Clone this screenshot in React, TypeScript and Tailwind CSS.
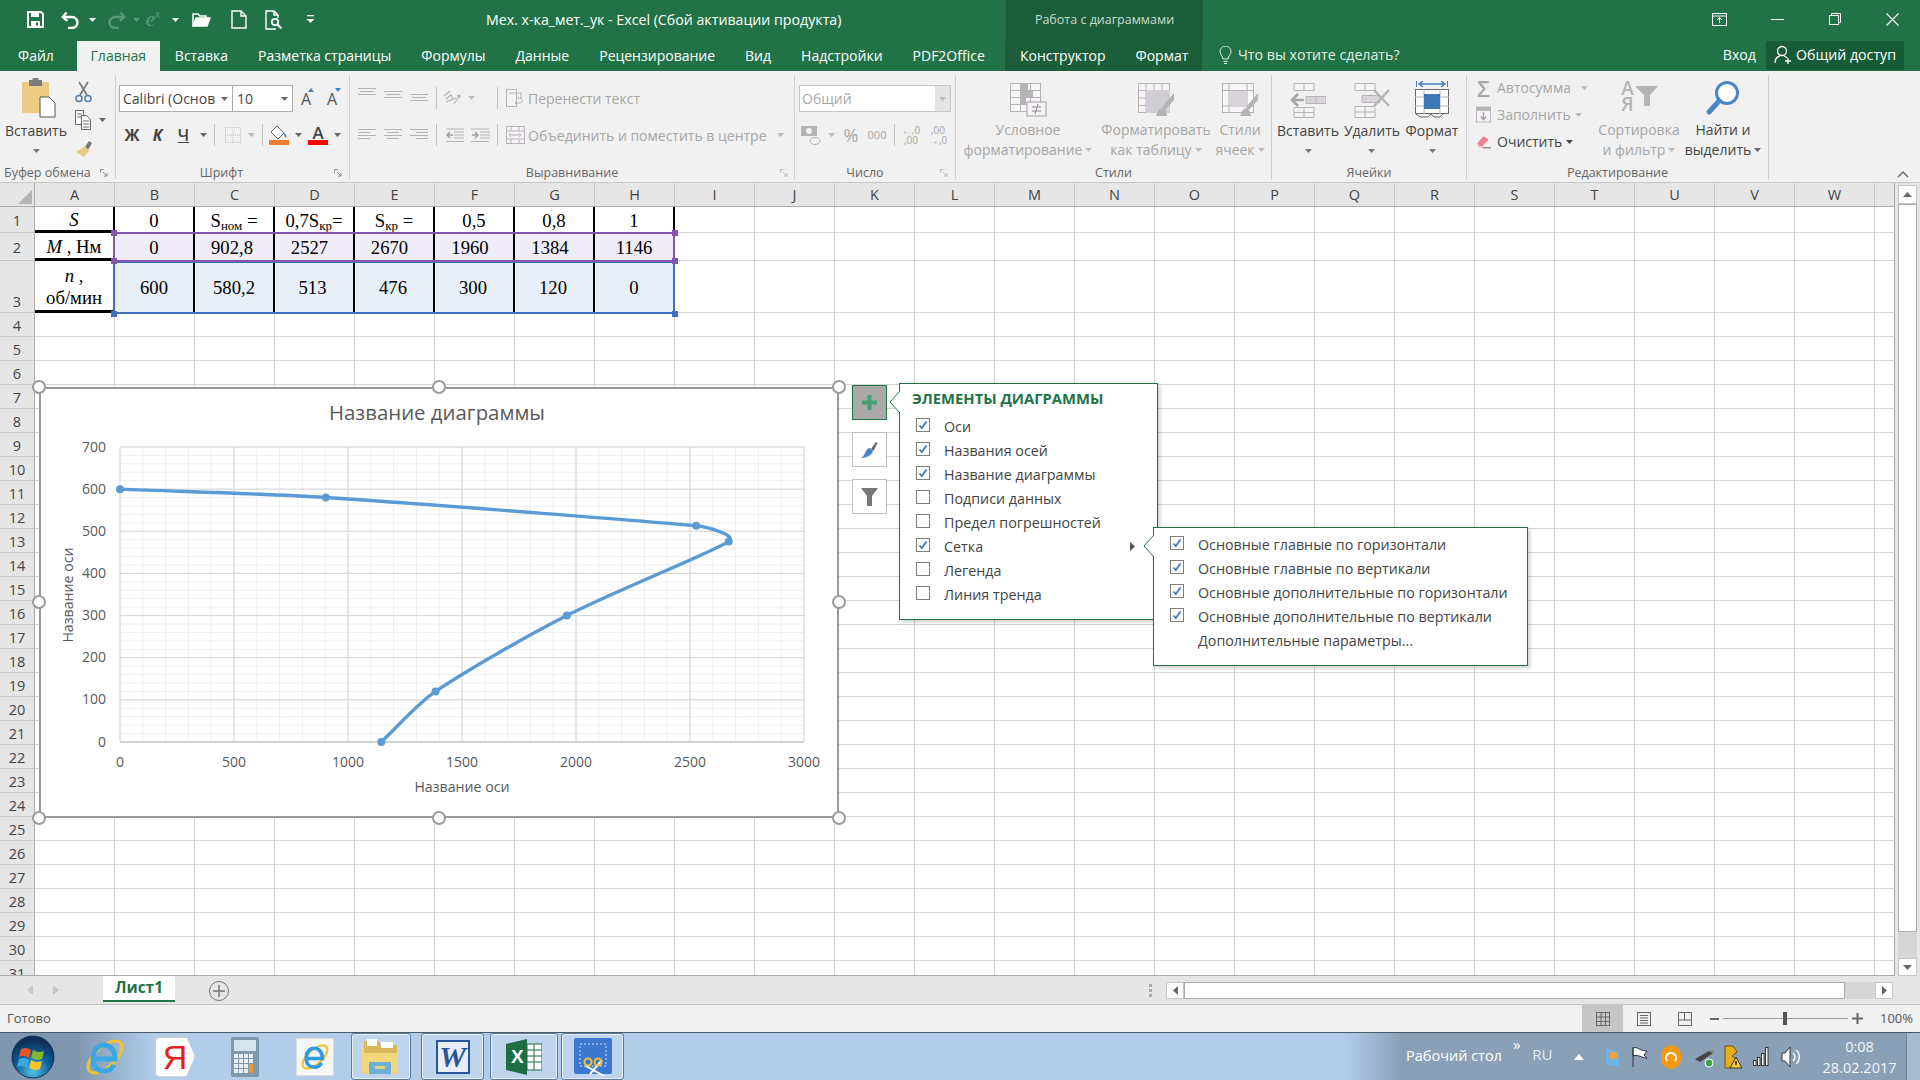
import React from "react";

const Caret = ({ c = "#666" }: { c?: string }) => (
  <svg width="7" height="4" viewBox="0 0 7 4"><path d="M0 0h7L3.5 4z" fill={c} /></svg>
);
const Launcher = ({ c = "#888" }: { c?: string }) => (
  <svg width="9" height="9" viewBox="0 0 9 9" fill="none" stroke={c}><path d="M.5 3.5V.5h3M3 3l4 4M7 4v3H4" /></svg>
);
const Sep = () => <div className="w-px h-[22px] bg-[#c6c6c6]" />;

const AlignLines = ({ rows }: { rows: [number, number][] }) => (
  <svg width="18" height="14" viewBox="0 0 18 14" stroke="#b4b4b4" strokeWidth="1">
    {rows.map(([a, b], i) => <path key={i} d={`M${a} ${i * 3 + 1.5}H${b}`} />)}
  </svg>
);

function smoothPath(p: [number, number][]) {
  const dist = (a: number[], b: number[]) => Math.hypot(a[0] - b[0], a[1] - b[1]);
  const dir = (i: number) => {
    const a = p[Math.max(i - 1, 0)], c = p[Math.min(i + 1, p.length - 1)];
    const l = dist(a, c) || 1;
    return [(c[0] - a[0]) / l, (c[1] - a[1]) / l];
  };
  const seg = (i: number) => (i < 0 || i >= p.length - 1 ? Infinity : dist(p[i], p[i + 1]));
  let d = `M${p[0][0]} ${p[0][1]}`;
  for (let i = 0; i < p.length - 1; i++) {
    const L = seg(i);
    const h1 = Math.min(L * 0.3, seg(i - 1) * 0.5);
    const h2 = Math.min(L * 0.3, seg(i + 1) * 0.5);
    const d1 = dir(i), d2 = dir(i + 1);
    d += ` C${p[i][0] + d1[0] * h1} ${p[i][1] + d1[1] * h1} ${p[i + 1][0] - d2[0] * h2} ${p[i + 1][1] - d2[1] * h2} ${p[i + 1][0]} ${p[i + 1][1]}`;
  }
  return d;
}

function Chart() {
  const X = (v: number) => 120 + (v * 684) / 3000;
  const Y = (v: number) => 742 - (v * 295) / 700;
  const data: [number, number][] = [[0, 600], [902.8, 580.2], [2527, 513], [2670, 476], [1960, 300], [1384, 120], [1146, 0]];
  const pts = data.map(([a, b]) => [X(a), Y(b)] as [number, number]);
  const xsMinor = Array.from({ length: 31 }, (_, i) => i * 100);
  const ysMinor = Array.from({ length: 36 }, (_, i) => i * 20);
  return (
    <svg width="800" height="431" viewBox="39 387 800 431" className="block">
      {xsMinor.map((v) => <path key={v} d={`M${X(v)} 447V742`} stroke="#efefef" strokeWidth="1" />)}
      {ysMinor.map((v) => <path key={v} d={`M120 ${Y(v)}H804`} stroke="#efefef" strokeWidth="1" />)}
      {[0, 500, 1000, 1500, 2000, 2500, 3000].map((v) => <path key={v} d={`M${X(v)} 447V742`} stroke="#d6d6d6" strokeWidth="1" />)}
      {[0, 100, 200, 300, 400, 500, 600, 700].map((v) => <path key={v} d={`M120 ${Y(v)}H804`} stroke="#d6d6d6" strokeWidth="1" />)}
      <path d="M120 742H804" stroke="#bfbfbf" strokeWidth="1" />
      <path d={smoothPath(pts)} fill="none" stroke="#5b9bd5" strokeWidth="3.4" strokeLinecap="round" />
      {pts.map(([a, b], i) => <circle key={i} cx={a} cy={b} r="4" fill="#5b9bd5" />)}
      <g fontFamily="'Open Sans', sans-serif" fill="#595959" fontSize="14">
        <text x="437" y="420" textAnchor="middle" fontSize="20.4">Название диаграммы</text>
        {[0, 100, 200, 300, 400, 500, 600, 700].map((v) => <text key={v} x="106" y={Y(v) + 4.5} textAnchor="end">{v}</text>)}
        {[0, 500, 1000, 1500, 2000, 2500, 3000].map((v) => <text key={v} x={X(v)} y="767" textAnchor="middle">{v}</text>)}
        <text x="462" y="792" textAnchor="middle" fontSize="14.2">Название оси</text>
        <text x="0" y="0" textAnchor="middle" fontSize="14.2" transform="translate(73 595) rotate(-90)">Название оси</text>
      </g>
    </svg>
  );
}

const Handle = ({ className }: { className: string }) => (
  <div className={`absolute w-[14px] h-[14px] rounded-full bg-white border-[2.5px] border-[#9a9a9a] ${className}`} />
);

const Check = ({ on }: { on: boolean }) => (
  <div className="w-[14px] h-[14px] bg-white border border-[#7f7f7f] flex items-center justify-center shrink-0">
    {on && (
      <svg width="10" height="10" viewBox="0 0 10 10" fill="none"><path d="M1.5 5.5l2.3 2.5L8.5 1.5" stroke="#3f78b8" strokeWidth="1.8" /></svg>
    )}
  </div>
);

const MenuRow = ({ on, label }: { on?: boolean; label: string }) => (
  <div className="h-[24px] flex items-center pl-[16px]">
    {on === undefined ? <div className="w-[14px]" /> : <div className="-mt-[5px]"><Check on={on} /></div>}
    <span className="ml-[14px] text-[14.3px] text-[#444] whitespace-nowrap">{label}</span>
  </div>
);

const COLS = "ABCDEFGHIJKLMNOPQRSTUVW".split("");

const TableText = ({ children }: { children: React.ReactNode }) => (
  <div className="font-['Liberation_Serif'] text-[18.67px] leading-[22px] text-black text-center mt-[3px]">{children}</div>
);

const row1 = [
  <i key="a">S</i>, "0",
  <span key="c">S<sub className="text-[13px] leading-[0]">ном</sub> =</span>,
  <span key="d">0,7S<sub className="text-[13px] leading-[0]">кр</sub>=</span>,
  <span key="e">S<sub className="text-[13px] leading-[0]">кр</sub> =</span>,
  "0,5", "0,8", "1",
];
const row2 = [
  <span key="a"><i>M</i> , Нм</span>, "0",
  <span key="c" className="pr-[4px]">902,8</span>,
  <span key="d" className="pr-[9px]">2527</span>,
  <span key="e" className="pr-[9px]">2670</span>,
  <span key="f" className="pr-[8px]">1960</span>,
  <span key="g" className="pr-[8px]">1384</span>, "1146",
];
const row3 = [
  <span key="a" className="block"><i>n</i> ,<br />об/мин</span>, "600", "580,2",
  <span key="d" className="pr-[3px]">513</span>,
  <span key="e" className="pr-[2px]">476</span>,
  <span key="f" className="pr-[2px]">300</span>,
  <span key="g" className="pr-[2px]">120</span>, "0",
];

function GridRow({ n }: { n: number }) {
  const h = n === 1 ? "h-[26px]" : n === 2 ? "h-[28px]" : n === 3 ? "h-[52px]" : "h-[24px]";
  const data = n === 1 ? row1 : n === 2 ? row2 : n === 3 ? row3 : null;
  const bg = n === 2 ? "bg-[#f1edf8]" : n === 3 ? "bg-[#e8eff9]" : "bg-white";
  return (
    <div className={`flex ${h} shrink-0`}>
      <div className={`w-[35px] shrink-0 bg-[#e6e6e6] border-r border-b border-r-[#ababab] border-b-[#c6c6c6] flex justify-center text-[14.5px] leading-[20px] text-[#444] ${n === 3 ? "items-end" : "items-center pt-[3px]"}`}>{n}</div>
      {COLS.map((c, i) => {
        const isData = data && i < 8;
        const border = isData
          ? `border-r-2 border-r-black ${i === 0 ? "border-b-[3px] border-b-black" : "border-b border-b-[#d4d4d4]"}`
          : "border-r border-b border-[#d4d4d4]";
        const cellBg = isData && i > 0 ? bg : "bg-white";
        return (
          <div key={c} className={`w-[80px] shrink-0 flex items-center justify-center ${border} ${cellBg}`}>
            {isData && <TableText>{data![i]}</TableText>}
          </div>
        );
      })}
      <div className="w-[20px] shrink-0 border-b border-[#d4d4d4] bg-white" />
    </div>
  );
}

const Tab = ({ children }: { children: React.ReactNode }) => (
  <div className="h-full flex items-center px-[15px] pb-[2px] whitespace-nowrap text-[14px] text-white">{children}</div>
);

const GroupLabel = ({ children }: { children: React.ReactNode }) => (
  <div className="relative h-[16px] -mb-[2px] mt-auto flex items-center justify-center text-[12.5px] text-[#666] whitespace-nowrap">
    <span>{children}</span>
  </div>
);

const BigLabel = ({ a, b, dim }: { a: string; b?: string; dim?: boolean }) => (
  <div className={`text-[14px] leading-[20px] mt-[3px] text-center whitespace-nowrap ${dim ? "text-[#a6a6a6]" : "text-[#444]"}`}>
    <div>{a}</div>
    {b !== undefined ? (
      <div className="flex items-center justify-center gap-[3px]">{b}<Caret c={dim ? "#bbb" : "#666"} /></div>
    ) : (
      <div className="flex justify-center h-[20px] items-center"><Caret c="#777" /></div>
    )}
  </div>
);

export default function App() {
  return (
    <div className="relative w-[1920px] h-[1080px] overflow-hidden bg-white font-['Open_Sans',sans-serif] flex flex-col">
      {/* Title bar */}
      <div className="flex h-[41px] bg-[#217346] text-white shrink-0">
        <div className="w-[1006px] flex items-center pb-[2px]">
          <div className="w-[24px] ml-[23px] flex justify-center">
            <svg width="17" height="17" viewBox="0 0 17 17"><path d="M1 1h13l2 2v13H1z" fill="none" stroke="#fff" strokeWidth="2" /><rect x="4" y="1" width="8" height="5" fill="#fff" /><rect x="4" y="10" width="9" height="6" fill="#fff" /><rect x="9" y="11.5" width="2" height="3" fill="#217346" /></svg>
          </div>
          <div className="w-[24px] ml-[12px] flex justify-center">
            <svg width="20" height="18" viewBox="0 0 20 18" fill="none" stroke="#fff" strokeWidth="2.4"><path d="M5.5 1.5L1.8 6l4.5 3.8" /><path d="M2 6h9a5.5 5.5 0 0 1 0 11H7" /></svg>
          </div>
          <div className="w-[12px] ml-[3px] flex justify-center"><Caret c="#fff" /></div>
          <div className="w-[24px] ml-[6px] flex justify-center">
            <svg width="20" height="18" viewBox="0 0 20 18" fill="none" stroke="#5a9a78" strokeWidth="2.4"><path d="M14.5 1.5L18.2 6l-4.5 3.8" /><path d="M18 6H9a5.5 5.5 0 0 0 0 11h4" /></svg>
          </div>
          <div className="w-[12px] ml-[2px] flex justify-center"><Caret c="#5a9a78" /></div>
          <div className="w-[22px] h-[24px] flex items-center justify-center text-[#5a9a78] italic font-['Liberation_Serif'] text-[21px] leading-[21px]">e<span className="text-[12px] leading-[12px] -mt-[12px]">x</span></div>
          <div className="w-[12px] ml-[5px] flex justify-center"><Caret c="#fff" /></div>
          <div className="w-[24px] ml-[8px] flex justify-center">
            <svg width="19" height="15" viewBox="0 0 19 15" fill="none" stroke="#fff" strokeWidth="1.5"><path d="M1 14V2h5l2 2h6v2" /><path d="M1 14l3-8h14l-3 8z" fill="#fff" /></svg>
          </div>
          <div className="w-[24px] ml-[14px] flex justify-center">
            <svg width="16" height="19" viewBox="0 0 16 19" fill="none" stroke="#fff" strokeWidth="1.4"><path d="M1 1h9l5 5v12H1zM10 1v5h5" /></svg>
          </div>
          <div className="w-[24px] ml-[11px] flex justify-center">
            <svg width="18" height="20" viewBox="0 0 18 20" fill="none" stroke="#fff" strokeWidth="1.4"><path d="M11 19H1V1h8l4 4v3M9 1v4h4" /><circle cx="10" cy="12" r="3.2" strokeWidth="1.8" /><path d="M12.5 14.5l4 4" strokeWidth="2.2" /></svg>
          </div>
          <div className="w-[12px] ml-[18px] flex justify-center">
            <svg width="9" height="9" viewBox="0 0 9 9" fill="#fff"><rect x="1" y="0" width="7" height="1.3" /><path d="M0.5 4h8L4.5 8z" /></svg>
          </div>
          <div className="ml-[170px] text-[14.2px] whitespace-nowrap">Мех. х-ка_мет._ук - Excel (Сбой активации продукта)</div>
        </div>
        <div className="w-[197px] bg-[#1c5e3a] flex items-center justify-center text-[12.5px] text-[#c9dcd0] whitespace-nowrap">Работа с диаграммами</div>
        <div className="flex-1 flex items-center pb-[3px]">
          <div className="ml-[509px]">
            <svg width="15" height="13" viewBox="0 0 15 13" fill="none" stroke="#fff"><rect x=".5" y=".5" width="14" height="12" /><path d="M.5 3h14M7.5 10V5M5 7l2.5-2.5L10 7" /></svg>
          </div>
          <div className="ml-[44px] w-[13px] h-px bg-white" />
          <div className="ml-[45px]">
            <svg width="12" height="12" viewBox="0 0 12 12" fill="none" stroke="#fff"><rect x=".5" y="2.5" width="9" height="9" /><path d="M2.5 2.5v-2h9v9h-2" /></svg>
          </div>
          <div className="ml-[45px]">
            <svg width="13" height="13" viewBox="0 0 13 13" stroke="#fff" strokeWidth="1.1"><path d="M.5.5l12 12M12.5.5l-12 12" /></svg>
          </div>
        </div>
      </div>
      {/* Tabs */}
      <div className="flex h-[30px] bg-[#217346] shrink-0">
        <div className="w-[1006px] flex pl-[3px]">
          <Tab>Файл</Tab>
          <div className="h-full w-[83px] ml-[8px] pb-[2px] bg-[#f1f1f1] flex items-center justify-center text-[14px] text-[#217346] whitespace-nowrap">Главная</div>
          <Tab>Вставка</Tab>
          <Tab>Разметка страницы</Tab>
          <Tab>Формулы</Tab>
          <Tab>Данные</Tab>
          <Tab>Рецензирование</Tab>
          <Tab>Вид</Tab>
          <Tab>Надстройки</Tab>
          <Tab>PDF2Office</Tab>
        </div>
        <div className="w-[197px] bg-[#1c5e3a] flex -ml-[1px]">
          <Tab>Конструктор</Tab>
          <Tab>Формат</Tab>
        </div>
        <div className="flex-1 flex items-center pb-[2px] text-[14.2px] text-[#e4efe8] whitespace-nowrap">
          <svg className="ml-[17px]" width="13" height="19" viewBox="0 0 13 19" fill="none" stroke="#e4efe8"><path d="M4 13c0-3-3-4-3-7.500a5.500 5.500 0 0 1 11 0C12 9 9 10 9 13zM4.500 15.500h4M5 17.500h3" /></svg>
          <span className="ml-[6px]">Что вы хотите сделать?</span>
          <span className="ml-auto text-white">Вход</span>
          <div className="ml-[10px] mr-[16px] w-[138px] h-[29px] bg-[#185c37] flex items-center text-white">
            <svg className="ml-[8px]" width="18" height="20" viewBox="0 0 18 20" fill="none" stroke="#fff" strokeWidth="1.3"><circle cx="8" cy="6" r="4.500" /><path d="M1 18c0-5 3-6.500 5-7M10 11c1 .3 2 .8 3 2M14 13v6M11 16h6" /></svg>
            <span className="ml-[4px]">Общий доступ</span>
          </div>
        </div>
      </div>

      {/* Ribbon */}
      <div className="h-[112px] bg-[#f1f1f1] border-b border-[#c6c6c6] flex pt-[4px] pb-[3px] shrink-0">
        {/* Clipboard */}
        <div className="w-[116px] border-r border-[#d0d0d0] flex flex-col">
          <div className="flex">
            <div className="w-[72px] flex flex-col items-center pt-[3px]">
              <svg className="ml-[6px]" width="36" height="40" viewBox="0 0 36 40"><rect x="1" y="4" width="27" height="31" rx="1" fill="#eecb82" /><rect x="8" y="2" width="13" height="6" fill="#7b7b7b" /><rect x="11.500" y="0" width="6" height="4" rx="1" fill="#7b7b7b" /><path d="M19 19h9l6 6v14H19z" fill="#fff" stroke="#555" /></svg>
              <BigLabel a="Вставить" />
            </div>
            <div className="flex flex-col pt-[3px]">
              <div className="h-[28px] w-[22px] flex items-center justify-center">
                <svg width="17" height="22" viewBox="0 0 17 22" fill="none"><path d="M4 1l8 13M13 1L5 14" stroke="#777" strokeWidth="1.6" /><circle cx="4" cy="17.500" r="3" stroke="#4a7ebb" strokeWidth="1.5" /><circle cx="13" cy="17.500" r="3" stroke="#4a7ebb" strokeWidth="1.5" /></svg>
              </div>
              <div className="h-[28px] flex items-center">
                <div className="w-[22px] flex justify-center">
                  <svg width="16" height="20" viewBox="0 0 16 20" fill="#fff" stroke="#666"><path d="M.5.5h8v14h-8zM2 4h5M2 7h5" /><path d="M6.500 5.500h5l4 4v10h-9zM8 11h6M8 14h6M8 17h6" /></svg>
                </div>
                <div className="ml-[5px]"><Caret /></div>
              </div>
              <div className="h-[28px] w-[22px] flex items-center justify-center">
                <svg width="17" height="17" viewBox="0 0 17 17"><path d="M10 7l4-6 3 2-4 7z" fill="#777" /><path d="M10 6l4 5-5 6-8-5z" fill="#eecb82" /></svg>
              </div>
            </div>
          </div>
          <div className="relative mt-auto h-[16px] -mb-[2px] flex items-center pl-[4px] text-[12.5px] text-[#666] whitespace-nowrap">
            Буфер обмена
            <div className="absolute left-[100px] top-[4px]"><Launcher /></div>
          </div>
        </div>

        {/* Font */}
        <div className="w-[234px] border-r border-[#d0d0d0] flex flex-col">
          <div className="flex mt-[10px] ml-[3px] items-center">
            <div className="w-[114px] h-[27px] bg-white border border-[#ababab] flex items-center text-[14px] text-[#444] whitespace-nowrap pl-[3px]">
              Calibri (Основ<div className="ml-auto mr-[4px]"><Caret /></div>
            </div>
            <div className="w-[60px] h-[27px] bg-white border border-l-0 border-[#ababab] flex items-center text-[14px] text-[#444] pl-[4px]">
              10<div className="ml-auto mr-[4px]"><Caret /></div>
            </div>
            <div className="w-[26px] flex justify-center text-[16px] leading-[16px] text-[#555] relative">A<span className="absolute right-[5px] -top-[3px] w-0 h-0 border-x-[3px] border-x-transparent border-b-[4px] border-b-[#4a7ebb]" /></div>
            <div className="w-[26px] flex justify-center text-[16px] leading-[16px] text-[#555] relative">A<span className="absolute right-[4px] -top-[3px] w-0 h-0 border-x-[3px] border-x-transparent border-t-[4px] border-t-[#4a7ebb]" /></div>
          </div>
          <div className="flex mt-[11px] ml-[3px] items-center h-[24px] text-[#444]">
            <div className="w-[26px] text-center font-bold text-[16px]">Ж</div>
            <div className="w-[25px] text-center font-bold italic text-[16px]">К</div>
            <div className="w-[27px] text-center font-semibold text-[16px] underline">Ч</div>
            <div className="w-[12px] flex justify-center"><Caret /></div>
            <div className="ml-[5px]"><Sep /></div>
            <div className="ml-[6px] w-[24px] flex justify-center">
              <svg width="16" height="16" viewBox="0 0 16 16" fill="none" stroke="#c4bcd0" strokeDasharray="1 1"><rect x=".5" y=".5" width="15" height="15" /><path d="M8 0v16M0 8h16" /></svg>
            </div>
            <div className="w-[12px] flex justify-center"><Caret c="#bbb" /></div>
            <div className="ml-[5px]"><Sep /></div>
            <div className="ml-[5px] w-[22px] flex flex-col items-center">
              <svg width="20" height="15" viewBox="0 0 20 15"><path d="M8 1l7 7-6 6-7-7z" fill="#fff" stroke="#666" /><path d="M15 8c2 1 3 3 2 5-1-1-2-2-2-5z" fill="#3f78b8" /></svg>
              <div className="w-[20px] h-[5px] bg-[#ed7d31]" />
            </div>
            <div className="w-[12px] ml-[2px] flex justify-center"><Caret /></div>
            <div className="w-[22px] ml-[3px] flex flex-col items-center">
              <div className="text-[17px] leading-[15px] h-[15px] font-semibold text-[#444]">A</div>
              <div className="w-[20px] h-[5px] bg-[#ff0000]" />
            </div>
            <div className="w-[12px] ml-[2px] flex justify-center"><Caret /></div>
          </div>
          <div className="relative mt-auto h-[16px] -mb-[2px] flex items-center justify-center pr-[22px] text-[12.5px] text-[#666]">
            Шрифт
            <div className="absolute right-[6px] top-[4px]"><Launcher /></div>
          </div>
        </div>

        {/* Alignment */}
        <div className="w-[445px] border-r border-[#d0d0d0] flex flex-col text-[14px] text-[#a6a6a6]">
          <div className="flex ml-[4px] mt-[11px] h-[24px] items-center whitespace-nowrap">
            <div className="w-[26px] flex justify-center -mt-[8px]"><AlignLines rows={[[0, 18], [2, 16], [0, 18]]} /></div>
            <div className="w-[26px] flex justify-center -mt-[2px]"><AlignLines rows={[[0, 18], [2, 16], [0, 18]]} /></div>
            <div className="w-[26px] flex justify-center mt-[3px]"><AlignLines rows={[[0, 18], [2, 16], [0, 18]]} /></div>
            <div className="ml-[4px]"><Sep /></div>
            <div className="ml-[4px] w-[24px] flex justify-center">
              <svg width="20" height="18" viewBox="0 0 20 18" fill="none" stroke="#b4b4b4" strokeWidth="1.3"><path d="M1 7l6-5M3 10l5-4 2 4M3 13l10-4M11 15l6-9M17 6l-3 1M17 6v3" /></svg>
            </div>
            <div className="w-[12px] flex justify-center"><Caret c="#bbb" /></div>
            <div className="ml-[20px]"><Sep /></div>
            <div className="ml-[5px] w-[24px] flex justify-center">
              <svg width="18" height="18" viewBox="0 0 18 18" fill="#f6f2f8" stroke="#b4b4b4"><rect x=".5" y=".5" width="10" height="17" /><path d="M3 4h12v5h-5M14 9c3 0 3 5 0 5H9M11 12l-2 2 2 2" fill="none" /></svg>
            </div>
            <span className="ml-[1px]">Перенести текст</span>
          </div>
          <div className="flex ml-[4px] mt-[13px] h-[24px] items-center whitespace-nowrap">
            <div className="w-[26px] flex justify-center"><AlignLines rows={[[0, 18], [0, 12], [0, 18], [0, 12]]} /></div>
            <div className="w-[26px] flex justify-center"><AlignLines rows={[[0, 18], [3, 15], [0, 18], [3, 15]]} /></div>
            <div className="w-[26px] flex justify-center"><AlignLines rows={[[0, 18], [6, 18], [0, 18], [6, 18]]} /></div>
            <div className="ml-[4px]"><Sep /></div>
            <div className="ml-[4px] w-[26px] flex justify-center">
              <svg width="19" height="15" viewBox="0 0 19 15" fill="none" stroke="#b4b4b4"><path d="M1 1h18M9 4h10M9 7h10M9 10h10M1 13.500h18" /><path d="M8 7H2M5 4L2 7l3 3" stroke="#a0a0a0" strokeWidth="1.500" /></svg>
            </div>
            <div className="w-[26px] flex justify-center">
              <svg width="19" height="15" viewBox="0 0 19 15" fill="none" stroke="#b4b4b4"><path d="M0 1h18M9 4h10M9 7h10M9 10h10M0 13.500h18" /><path d="M1 7h6M4 4l3 3-3 3" stroke="#a0a0a0" strokeWidth="1.500" /></svg>
            </div>
            <div className="ml-[4px]"><Sep /></div>
            <div className="ml-[5px] w-[24px] flex justify-center">
              <svg width="19" height="18" viewBox="0 0 19 18" fill="#f6f2f8" stroke="#b4b4b4"><rect x=".5" y=".5" width="18" height="17" /><path d="M.5 5h18M.5 13h18M5 .5V5M13 .5V5M5 13v5M13 13v5M3 9h12M5 7L3 9l2 2M13 7l2 2-2 2" fill="none" /></svg>
            </div>
            <span className="ml-[1px]">Объединить и поместить в центре</span>
            <div className="ml-[10px]"><Caret c="#bbb" /></div>
          </div>
          <div className="relative mt-auto h-[16px] -mb-[2px] flex items-center justify-center text-[12.5px] text-[#666]">
            Выравнивание
            <div className="absolute right-[5px] top-[4px]"><Launcher c="#bbb" /></div>
          </div>
        </div>

        {/* Number */}
        <div className="w-[161px] border-r border-[#d0d0d0] flex flex-col text-[#a6a6a6]">
          <div className="ml-[4px] mt-[10px] w-[152px] h-[27px] bg-white border border-[#c6c6c6] flex items-center text-[14px] pl-[2px]">
            Общий
            <div className="ml-auto w-[15px] h-full bg-[#e4e4e4] flex items-center justify-center"><Caret c="#bbb" /></div>
          </div>
          <div className="flex ml-[4px] mt-[11px] h-[24px] items-center">
            <div className="w-[24px] flex justify-center">
              <svg width="20" height="20" viewBox="0 0 20 20"><rect x="0" y="1" width="16" height="10" fill="#b4b4b4" /><circle cx="8" cy="6" r="3" fill="#f1f1f1" /><ellipse cx="14" cy="16" rx="5" ry="3.500" fill="#f1f1f1" stroke="#b4b4b4" /></svg>
            </div>
            <div className="w-[12px] ml-[2px] flex justify-center"><Caret c="#bbb" /></div>
            <div className="w-[22px] ml-[3px] text-center text-[18px] leading-[18px]">%</div>
            <div className="w-[26px] ml-[2px] text-center text-[11px]">000</div>
            <div className="ml-[4px]"><Sep /></div>
            <div className="ml-[4px] w-[24px] text-center text-[10px] leading-[10px]">←,0<br />,00</div>
            <div className="ml-[3px] w-[24px] text-center text-[10px] leading-[10px]">,00<br />→,0</div>
          </div>
          <div className="relative mt-auto h-[16px] -mb-[2px] flex items-center justify-center pr-[20px] text-[12.5px] text-[#666]">
            Число
            <div className="absolute right-[6px] top-[4px]"><Launcher c="#bbb" /></div>
          </div>
        </div>

        {/* Styles */}
        <div className="w-[316px] border-r border-[#d0d0d0] flex flex-col">
          <div className="flex ml-[6px] mt-[8px]">
            <div className="w-[132px] flex flex-col items-center">
              <svg width="37" height="34" viewBox="0 0 37 34" fill="#f8f4fa" stroke="#b4b4b4"><rect x=".5" y=".5" width="30" height="28" /><path d="M10.500 0v28M20.500 0v28M0 7.500h30M0 14.500h30M0 21.500h30" fill="none" /><rect x="11" y="1" width="7" height="6" fill="#b4b4b4" stroke="none" /><rect x="11" y="8" width="12" height="6" fill="#b4b4b4" stroke="none" /><rect x="11" y="15" width="5" height="6" fill="#b4b4b4" stroke="none" /><rect x="17" y="19" width="19" height="14" fill="#f6f2f8" stroke="#a0a0a0" /><path d="M22 24h9M22 28h9M28 21l-3 10" fill="none" stroke="#888" /></svg>
              <BigLabel a="Условное" b="форматирование" dim />
            </div>
            <div className="ml-[5px] w-[114px] flex flex-col items-center">
              <svg width="37" height="34" viewBox="0 0 37 34" fill="#f8f4fa" stroke="#b4b4b4"><rect x=".5" y=".5" width="31" height="29" /><path d="M8 0v30M16 0v30M24 0v30M0 7.500h32M0 15h32M0 22.500h32" fill="none" /><rect x="8" y="7" width="24" height="23" fill="#d0cdd4" stroke="none" /><path d="M36 10L24 24l3 3 9-10zM24 25c-3 1-5 4-6 8h11c0-3-2-7-5-8z" fill="#b4b4b4" stroke="none" /></svg>
              <BigLabel a="Форматировать" b="как таблицу" dim />
            </div>
            <div className="w-[54px] flex flex-col items-center">
              <svg width="37" height="34" viewBox="0 0 37 34" fill="#f8f4fa" stroke="#b4b4b4"><rect x=".5" y=".5" width="31" height="29" /><path d="M7 0v30M25 0v30M0 7.500h32M0 23h32" fill="none" /><rect x="8" y="8" width="17" height="15" fill="#d8d4da" stroke="none" /><path d="M36 10L24 24l3 3 9-10zM24 25c-3 1-5 4-6 8h11c0-3-2-7-5-8z" fill="#b4b4b4" stroke="none" /></svg>
              <BigLabel a="Стили" b="ячеек" dim />
            </div>
          </div>
          <GroupLabel>Стили</GroupLabel>
        </div>

        {/* Cells */}
        <div className="w-[195px] border-r border-[#d0d0d0] flex flex-col">
          <div className="flex ml-[5px] mt-[5px]">
            <div className="w-[62px] flex flex-col items-center">
              <svg className="mt-[3px] h-[35px]" width="36" height="35" viewBox="0 0 36 35" fill="#f6f2f8" stroke="#b4b4b4"><path d="M4 .5h20v7H4zM14 .5v7M4 24.500h20v10H4zM4 29.500h20M14 24.500v10" /><path d="M16 13.500h20v7H16zM26 13.500v7" fill="#d8d4da" /><path d="M14 17H3M8 11l-6 6 6 6" fill="none" stroke="#a6a6a6" strokeWidth="2.500" /></svg>
              <BigLabel a="Вставить" />
            </div>
            <div className="w-[60px] ml-[3px] flex flex-col items-center">
              <svg className="mt-[3px] h-[35px]" width="36" height="35" viewBox="0 0 36 35" fill="#f6f2f8" stroke="#b4b4b4"><path d="M1 .5h20v7H1zM11 .5v7M1 23.500h20v11H1zM1 29h20M11 23.500v11" /><path d="M8 12.500h18v7H8z" fill="#d8d4da" /><path d="M20 7l15 16M35 7L20 23" fill="none" stroke="#b4b4b4" strokeWidth="2.500" /></svg>
              <BigLabel a="Удалить" />
            </div>
            <div className="w-[60px] flex flex-col items-center">
              <svg className="mt-[1px] h-[37px]" width="34" height="37" viewBox="0 0 34 37" fill="none"><path d="M1.500 0v6M32.500 0v6" stroke="#4a7ebb" /><path d="M4 3h26M8 0L4 3l4 3M26 0l4 3-4 3" stroke="#4a7ebb" strokeWidth="1.500" /><rect x=".5" y="8.500" width="33" height="24" fill="#fff" stroke="#666" /><path d="M9 8v25M25 8v25M0 16h34M0 25h34" stroke="#b4b4b4" /><rect x="9" y="13" width="16" height="15" fill="#3f78b8" /><path d="M1 33l4 3h8l3-3M16 33l3 3h6l3-3" stroke="#666" /></svg>
              <BigLabel a="Формат" />
            </div>
          </div>
          <GroupLabel>Ячейки</GroupLabel>
        </div>

        {/* Editing */}
        <div className="w-[302px] border-r border-[#d0d0d0] flex flex-col">
          <div className="flex">
            <div className="ml-[9px] -mt-[1px] w-[116px] flex flex-col text-[14px] text-[#a6a6a6] whitespace-nowrap">
              <div className="h-[27px] flex items-center">
                <div className="w-[15px] text-center text-[22px] leading-[22px] font-semibold">Σ</div>
                <span className="ml-[6px]">Автосумма</span>
                <div className="ml-[10px]"><Caret c="#bbb" /></div>
              </div>
              <div className="h-[27px] flex items-center">
                <div className="w-[15px] flex justify-center">
                  <svg width="16" height="17" viewBox="0 0 16 17" fill="#f6f2f8" stroke="#b4b4b4"><rect x=".5" y=".5" width="15" height="16" /><rect x="1" y="1" width="14" height="3" fill="#b4b4b4" /><path d="M8 6v8M5 10.500l3 3.500 3-3.500" fill="none" strokeWidth="1.500" stroke="#a0a0a0" /></svg>
                </div>
                <span className="ml-[6px]">Заполнить</span>
                <div className="ml-[4px]"><Caret c="#bbb" /></div>
              </div>
              <div className="h-[27px] flex items-center text-[#444]">
                <div className="w-[15px] flex justify-center">
                  <svg width="18" height="16" viewBox="0 0 18 16"><path d="M1 10L9 1l6 4-8 9z" fill="#ee7f8f" /><path d="M1 10l5 4h1l-1 1H3z" fill="#f5b7c0" /><path d="M8 15h10" stroke="#444" /></svg>
                </div>
                <span className="ml-[6px]">Очистить</span>
                <div className="ml-[4px]"><Caret c="#444" /></div>
              </div>
            </div>
            <div className="w-[94px] flex flex-col items-center">
              <div className="h-[37px] mt-[5px] flex items-start relative w-[38px]">
                <div className="text-[19px] leading-[16px] text-[#b4b4b4] font-semibold text-center w-[15px]">A<br />Я</div>
                <svg className="mt-[6px]" width="23" height="20" viewBox="0 0 23 20" fill="#b4b4b4"><path d="M0 0h23l-8 9v11h-6V9z" /></svg>
              </div>
              <BigLabel a="Сортировка" b="и фильтр" dim />
            </div>
            <div className="w-[74px] flex flex-col items-center">
              <div className="h-[37px] mt-[5px]">
                <svg width="36" height="36" viewBox="0 0 36 36" fill="none" stroke="#4a86c5"><circle cx="22" cy="13" r="10.500" strokeWidth="3" fill="#fff" /><path d="M14 21L4 32" strokeWidth="5" strokeLinecap="round" /></svg>
              </div>
              <BigLabel a="Найти и" b="выделить" />
            </div>
          </div>
          <GroupLabel>Редактирование</GroupLabel>
        </div>
        <div className="flex-1 flex items-end justify-end pr-[11px] pb-[1px]">
          <svg width="12" height="7" viewBox="0 0 12 7" fill="none" stroke="#666" strokeWidth="1.400"><path d="M1 6l5-5 5 5" /></svg>
        </div>
      </div>

      {/* Sheet */}
      <div className="h-[793px] flex bg-[#e6e6e6] shrink-0">
        <div className="w-[1895px] h-full border-r border-b border-[#ababab] overflow-hidden flex flex-col shrink-0">
          <div className="flex h-[24px] shrink-0 bg-[#e6e6e6] border-b border-[#ababab] text-[14.5px] text-[#444]">
            <div className="w-[35px] shrink-0 border-r border-[#ababab] flex items-end justify-end p-[2px]">
              <div className="w-0 h-0 border-l-[14px] border-l-transparent border-b-[14px] border-b-[#b4b4b4]" />
            </div>
            {COLS.map((c) => (
              <div key={c} className="w-[80px] shrink-0 border-r border-[#c6c6c6] flex items-center justify-center">{c}</div>
            ))}
          </div>
          {Array.from({ length: 31 }, (_, i) => <GridRow key={i} n={i + 1} />)}
        </div>
        <div className="flex-1 flex flex-col items-center pt-[2px]">
          <div className="w-[19px] h-[19px] bg-white border border-[#c6c6c6] flex items-center justify-center">
            <svg width="9" height="5" viewBox="0 0 9 5"><path d="M0 5L4.500 0 9 5z" fill="#666" /></svg>
          </div>
          <div className="w-[19px] h-[728px] bg-white border border-[#ababab]" />
          <div className="w-[19px] flex-1 bg-[#d6d6d6]" />
          <div className="w-[19px] h-[18px] bg-white border border-[#c6c6c6] flex items-center justify-center">
            <svg width="9" height="5" viewBox="0 0 9 5"><path d="M0 0l4.500 5L9 0z" fill="#666" /></svg>
          </div>
        </div>
      </div>

      {/* Sheet tabs */}
      <div className="h-[29px] bg-[#e6e6e6] border-b border-[#c6c6c6] flex shrink-0">
        <div className="w-[103px] flex items-center pl-[27px] gap-[20px]">
          <svg width="6" height="10" viewBox="0 0 6 10"><path d="M6 0L0 5l6 5z" fill="#c6c6c6" /></svg>
          <svg width="6" height="10" viewBox="0 0 6 10"><path d="M0 0l6 5-6 5z" fill="#c6c6c6" /></svg>
        </div>
        <div className="w-[72px] h-[26px] bg-white border-b-[2px] border-[#217346] flex items-center justify-center text-[15.5px] font-bold text-[#217346]">Лист1</div>
        <div className="ml-[34px] mt-[5px] w-[20px] h-[20px] rounded-full border border-[#777] flex items-center justify-center">
          <svg width="12" height="12" viewBox="0 0 12 12" stroke="#777" strokeWidth="1.500"><path d="M6 0v12M0 6h12" /></svg>
        </div>
        <div className="ml-[920px] mt-[8px] w-[3px] h-[13px] flex flex-col justify-between">
          <div className="w-[3px] h-[3px] bg-[#aaa]" /><div className="w-[3px] h-[3px] bg-[#aaa]" /><div className="w-[3px] h-[3px] bg-[#aaa]" />
        </div>
        <div className="ml-[14px] mt-[6px] w-[727px] h-[17px] flex">
          <div className="w-[18px] h-full bg-white border border-[#c6c6c6] flex items-center justify-center">
            <svg width="5" height="9" viewBox="0 0 5 9"><path d="M5 0L0 4.500 5 9z" fill="#666" /></svg>
          </div>
          <div className="w-[661px] h-full bg-white border border-[#ababab]" />
          <div className="w-[30px] h-full bg-[#d6d6d6]" />
          <div className="w-[18px] h-full bg-white border border-[#c6c6c6] flex items-center justify-center">
            <svg width="5" height="9" viewBox="0 0 5 9"><path d="M0 0l5 4.500L0 9z" fill="#666" /></svg>
          </div>
        </div>
      </div>

      {/* Status bar */}
      <div className="h-[27px] bg-[#f1f1f1] flex items-center text-[13px] text-[#555] shrink-0">
        <span className="ml-[7px]">Готово</span>
        <div className="ml-auto w-[41px] h-full bg-[#c6c6c6] flex items-center justify-center">
          <svg width="14" height="14" viewBox="0 0 14 14" fill="none" stroke="#666"><rect x=".5" y=".5" width="13" height="13" /><path d="M5 0v14M9.500 0v14M0 5h14M0 9.500h14" /></svg>
        </div>
        <div className="w-[41px] flex justify-center">
          <svg width="14" height="14" viewBox="0 0 14 14" fill="none" stroke="#666"><rect x=".5" y=".5" width="13" height="13" /><path d="M3 3.500h8M3 6h8M3 8.500h8M3 11h8" /></svg>
        </div>
        <div className="w-[41px] flex justify-center">
          <svg width="14" height="14" viewBox="0 0 14 14" fill="none" stroke="#666"><path d="M.5 13.500V.5h13v13zM6.500 0v8H0M6.500 8H14" /></svg>
        </div>
        <div className="w-[9px] h-[2px] ml-[5px] bg-[#666]" />
        <div className="relative w-[125px] ml-[4px] h-px bg-[#999]">
          <div className="absolute left-[60px] -top-[6px] w-[4px] h-[13px] bg-[#555]" />
        </div>
        <svg className="ml-[4px]" width="11" height="11" viewBox="0 0 11 11" stroke="#666" strokeWidth="2"><path d="M5.500 0v11M0 5.500h11" /></svg>
        <span className="ml-[17px] mr-[9px] w-[31px] whitespace-nowrap text-[13px]">100%</span>
      </div>

      {/* Taskbar */}
      <div className="h-[48px] border-t border-[#48596a] bg-[linear-gradient(90deg,#7f97af_0%,#7f97af_4%,#b3cde9_8%,#b3cde9_70%,#8aa0b7_73%,#8aa0b7_100%)] flex items-center text-white shrink-0">
        <div className="w-[66px] flex justify-center">
          <svg width="44" height="44" viewBox="0 0 44 44">
            <defs>
              <radialGradient id="orb" cx="50%" cy="85%" r="75%"><stop offset="0%" stopColor="#4fc3ea" /><stop offset="55%" stopColor="#0f5f96" /><stop offset="100%" stopColor="#0d2f55" /></radialGradient>
            </defs>
            <circle cx="22" cy="22" r="21" fill="url(#orb)" stroke="#15314f" />
            <path d="M10 14c4-2 7-1 10 1l-2 8c-3-2-6-3-10-1z" fill="#e8562a" />
            <path d="M22 15c3 2 7 3 11 1l-2 8c-4 2-8 0-11-1z" fill="#86b82d" />
            <path d="M8 24c4-2 7-1 10 1l-2 8c-3-2-6-3-10-1z" fill="#3fa9dd" />
            <path d="M20 25c3 2 7 3 11 1l-2 8c-4 2-8 0-11-1z" fill="#f7c52c" />
          </svg>
        </div>
        <div className="ml-[4px] w-[70px] flex justify-center">
          <svg width="42" height="44" viewBox="0 0 42 44" fill="none">
            <ellipse cx="21" cy="22" rx="21" ry="10" transform="rotate(-42 21 22)" stroke="#f2c230" strokeWidth="3" />
            <path d="M7 24h24c0-9-5-14-11-14S9 15 9 24c0 8 5 12 11 12 5 0 8-2 10-6" stroke="#3aa7e6" strokeWidth="5" />
          </svg>
        </div>
        <div className="w-[70px] flex justify-center">
          <div className="relative w-[40px] h-[40px] bg-white rounded-[4px] border border-[#ccc] flex items-center justify-center text-[34px] leading-[34px] text-[#e8211d] font-['Liberation_Sans',sans-serif] [clip-path:polygon(0_0,78%_0,100%_50%,78%_100%,0_100%)]">Я</div>
        </div>
        <div className="w-[70px] flex justify-center">
          <svg width="28" height="40" viewBox="0 0 28 40"><rect x="0" y="0" width="28" height="40" rx="2" fill="#7e98ac" /><rect x="3" y="3" width="22" height="11" fill="#d3e6ee" /><g fill="#eaeff2">{[17, 22, 27, 32].flatMap((y) => [3, 8, 13, 18].map((x) => <rect key={`${x}-${y}`} x={x} y={y} width="4" height="4" />))}</g><rect x="18" y="27" width="4" height="9" fill="#e69a2e" /></svg>
        </div>
        <div className="w-[70px] flex justify-center">
          <div className="w-[38px] h-[38px] bg-[#f7f7f7] border border-[#ddd] flex items-center justify-center">
            <svg width="32" height="32" viewBox="0 0 42 44" fill="none"><ellipse cx="21" cy="22" rx="21" ry="10" transform="rotate(-42 21 22)" stroke="#f2c230" strokeWidth="3" /><path d="M7 24h24c0-9-5-14-11-14S9 15 9 24c0 8 5 12 11 12 5 0 8-2 10-6" stroke="#2f9be0" strokeWidth="5" /></svg>
          </div>
        </div>
        <div className="ml-[1px] w-[60px] h-[47px] rounded-[3px] border border-[#5d7a99] bg-[#c3d8ee]/70 shadow-[inset_0_0_0_1px_rgba(255,255,255,0.6)] flex items-center justify-center">
          <svg width="40" height="38" viewBox="0 0 40 38"><rect x="1" y="8" width="36" height="28" rx="2" fill="#f0d77c" /><path d="M3 3h14l3 4h16v8H3z" fill="#d9b75a" /><rect x="6" y="1" width="10" height="7" fill="#fff" /><rect x="20" y="4" width="12" height="6" fill="#fff" /><path d="M8 36V24h22v12z" fill="#6ab2d8" /><rect x="14" y="28" width="10" height="3" fill="#e8d27a" /></svg>
        </div>
        <div className="ml-[10px] w-[63px] h-[47px] rounded-[3px] border border-[#5d7a99] bg-[#c3d8ee]/70 shadow-[inset_0_0_0_1px_rgba(255,255,255,0.6)] flex items-center justify-center">
          <div className="w-[34px] h-[34px] border-2 border-[#2a5699] bg-[#e6eefa] flex items-center justify-center text-[#2a5699] font-['Liberation_Serif',serif] font-bold italic text-[30px] leading-[30px]">W</div>
        </div>
        <div className="ml-[6px] w-[68px] h-[47px] rounded-[3px] border border-[#5d7a99] bg-[#c3d8ee]/70 shadow-[inset_0_0_0_1px_rgba(255,255,255,0.6)] flex items-center justify-center">
          <div className="relative w-[36px] h-[36px] flex items-center">
            <svg width="36" height="36" viewBox="0 0 36 36" className="absolute left-0 top-0"><path d="M0 5L21 0v36L0 31z" fill="#1d6f42" /><rect x="21" y="5" width="15" height="26" fill="#fff" stroke="#1d6f42" /><path d="M21 11h15M21 17h15M21 23h15M28 5v26" stroke="#1d6f42" /></svg>
            <span className="relative ml-[5px] text-white font-bold text-[19px] leading-[19px] font-['Liberation_Sans',sans-serif]">X</span>
          </div>
        </div>
        <div className="ml-[3px] w-[63px] h-[47px] rounded-[3px] border border-[#5d7a99] bg-[#c3d8ee]/70 shadow-[inset_0_0_0_1px_rgba(255,255,255,0.6)] flex items-center justify-center">
          <svg width="38" height="38" viewBox="0 0 38 38" fill="none"><rect x="0" y="0" width="38" height="36" rx="2" fill="#3c77d0" /><path d="M6 6h26v22H6z" stroke="#cfe0f7" strokeDasharray="2 2" /><path d="M12 28l18 10M28 22L16 36" stroke="#fff" strokeWidth="2" /><circle cx="14" cy="24" r="3.500" stroke="#f2c230" strokeWidth="2" /><circle cx="24" cy="24" r="3.500" stroke="#f2c230" strokeWidth="2" /></svg>
        </div>
        <div className="ml-[782px] -mt-[2px] text-[14.5px] whitespace-nowrap">Рабочий стол</div>
        <div className="ml-[11px] -mt-[24px] text-[15px] leading-[15px]">»</div>
        <div className="ml-[12px] text-[15px] -mt-[4px] text-[#e4ebf2]">RU</div>
        <svg className="ml-[21px]" width="10" height="6" viewBox="0 0 10 6"><path d="M0 6L5 0l5 6z" fill="#fff" /></svg>
        <svg className="ml-[20px]" width="18" height="22" viewBox="0 0 18 22"><path d="M2 2l13 4v15L2 18z" fill="#6db4e8" /><rect x="6" y="6" width="7" height="7" fill="#f2a33a" /></svg>
        <svg className="ml-[9px]" width="18" height="22" viewBox="0 0 18 22" fill="#fff" stroke="#334"><path d="M2 1v20M2 2c5-2 6 3 14 3l-3 4 3 3c-6 0-8-4-14-2z" /></svg>
        <div className="ml-[12px] w-[20px] h-[24px] rounded-[10px] bg-[#f39a12] flex items-center justify-center">
          <svg width="12" height="12" viewBox="0 0 12 12" fill="none" stroke="#fff" strokeWidth="2"><path d="M2 10a5 5 0 1 1 8 0" /></svg>
        </div>
        <svg className="ml-[13px]" width="22" height="22" viewBox="0 0 22 22"><path d="M1 13l14-8 4 2-13 9z" fill="#444" /><path d="M15 5l5-2v3l-1 1z" fill="#888" /><circle cx="15" cy="17" r="4" fill="#3aa63a" stroke="#fff" /></svg>
        <svg className="ml-[6px]" width="21" height="24" viewBox="0 0 21 24"><path d="M3 1h8l4 6-5 4 5 4-6 8H3z" fill="#e8ae1a" stroke="#6b5210" /><path d="M14 12l6 11H8z" fill="#f7d038" stroke="#333" /><path d="M14 16v4" stroke="#222" strokeWidth="1.500" /></svg>
        <svg className="ml-[10px]" width="16" height="19" viewBox="0 0 16 19" fill="#fff" stroke="#333"><rect x=".5" y="13.500" width="2.500" height="5" /><rect x="4.500" y="10.500" width="2.500" height="8" /><rect x="8.500" y="6.500" width="2.500" height="12" /><rect x="12.500" y=".5" width="2.500" height="18" /></svg>
        <svg className="ml-[12px]" width="20" height="24" viewBox="0 0 20 24" fill="none"><path d="M1 8h3l5-6v20l-5-6H1z" fill="#fff" stroke="#334" /><path d="M12 8a5 5 0 0 1 0 8M15 5a9 9 0 0 1 0 14" stroke="#fff" strokeWidth="1.400" /></svg>
        <div className="ml-[21px] w-[76px] flex flex-col items-center text-[14.5px] leading-[21px] text-[#f2f5f8]">
          <span>0:08</span>
          <span>28.02.2017</span>
        </div>
        <div className="ml-auto w-[14px] h-full bg-[#a9bccf] border-l border-[#6d8298]" />
      </div>

      {/* Selection overlay */}
      <div className="absolute left-[113px] top-[261px] w-[562px] h-[53px] border-[2px] border-[#3e6fc2]" />
      <div className="absolute left-[113px] top-[232px] w-[562px] h-[30px] border-[2px] border-[#7f58ae]" />
      <div className="absolute left-[111px] top-[230px] w-[6px] h-[6px] bg-[#7f58ae]" />
      <div className="absolute left-[672px] top-[230px] w-[6px] h-[6px] bg-[#7f58ae]" />
      <div className="absolute left-[111px] top-[258px] w-[6px] h-[6px] bg-[#7f58ae]" />
      <div className="absolute left-[672px] top-[258px] w-[6px] h-[6px] bg-[#7f58ae]" />
      <div className="absolute left-[111px] top-[311px] w-[6px] h-[6px] bg-[#3e6fc2]" />
      <div className="absolute left-[672px] top-[311px] w-[6px] h-[6px] bg-[#3e6fc2]" />

      {/* Chart */}
      <div className="absolute left-[39px] top-[387px] w-[800px] h-[431px] bg-white outline-2 -outline-offset-2 outline-[#9a9a9a]">
        <Chart />
      </div>
      <Handle className="left-[32px] top-[380px]" />
      <Handle className="left-[432px] top-[380px]" />
      <Handle className="left-[832px] top-[380px]" />
      <Handle className="left-[32px] top-[595px]" />
      <Handle className="left-[832px] top-[595px]" />
      <Handle className="left-[32px] top-[811px]" />
      <Handle className="left-[432px] top-[811px]" />
      <Handle className="left-[832px] top-[811px]" />

      {/* Chart buttons */}
      <div className="absolute left-[852px] top-[385px] w-[35px] h-[35px] bg-[#a9a9a9] border border-[#217346] flex items-center justify-center">
        <svg width="15" height="15" viewBox="0 0 15 15" stroke="#4a9c73" strokeWidth="4"><path d="M7.500 0v15M0 7.500h15" /></svg>
      </div>
      <div className="absolute left-[852px] top-[432px] w-[35px] h-[35px] bg-white border border-[#c0c0c0] flex items-center justify-center">
        <svg width="19" height="18" viewBox="0 0 19 18"><path d="M11 8l5-7 1.500 1-4 8z" fill="#666" /><path d="M10 7l3 3c-1 4-6 7-12 7 2-1 3-3 4-5 1-3 3-5 5-5z" fill="#4a86c5" /></svg>
      </div>
      <div className="absolute left-[852px] top-[479px] w-[35px] h-[35px] bg-white border border-[#c0c0c0] flex items-center justify-center">
        <svg width="17" height="18" viewBox="0 0 17 18"><path d="M0 0h17l-6 8v10H6V8z" fill="#777" /></svg>
      </div>

      {/* Elements panel */}
      <div className="absolute left-[899px] top-[383px] w-[259px] h-[237px] bg-white border border-[#217346] shadow-[2px_2px_4px_rgba(0,0,0,0.2)] flex flex-col pt-[2px]">
        <div className="h-[24px] pl-[12px] flex items-center text-[14.8px] font-bold text-[#217346] whitespace-nowrap">ЭЛЕМЕНТЫ ДИАГРАММЫ</div>
        <div className="mt-[5px] flex flex-col">
          <MenuRow on label="Оси" />
          <MenuRow on label="Названия осей" />
          <MenuRow on label="Название диаграммы" />
          <MenuRow on={false} label="Подписи данных" />
          <MenuRow on={false} label="Предел погрешностей" />
          <div className="relative">
            <MenuRow on label="Сетка" />
            <svg className="absolute left-[230px] top-[7px]" width="5" height="9" viewBox="0 0 5 9"><path d="M0 0l5 4.500L0 9z" fill="#555" /></svg>
          </div>
          <MenuRow on={false} label="Легенда" />
          <MenuRow on={false} label="Линия тренда" />
        </div>
      </div>
      <svg className="absolute left-[889px] top-[391px]" width="11" height="22" viewBox="0 0 11 22"><path d="M11 0L1 11l10 11" fill="#fff" stroke="#217346" /></svg>

      {/* Gridlines submenu */}
      <div className="absolute left-[1153px] top-[527px] w-[375px] h-[139px] bg-white border border-[#217346] shadow-[2px_2px_4px_rgba(0,0,0,0.2)] flex flex-col pt-[5px]">
        <MenuRow on label="Основные главные по горизонтали" />
        <MenuRow on label="Основные главные по вертикали" />
        <MenuRow on label="Основные дополнительные по горизонтали" />
        <MenuRow on label="Основные дополнительные по вертикали" />
        <MenuRow label="Дополнительные параметры..." />
      </div>
      <svg className="absolute left-[1143px] top-[535px]" width="11" height="22" viewBox="0 0 11 22"><path d="M11 0L1 11l10 11" fill="#fff" stroke="#217346" /></svg>
    </div>
  );
}
